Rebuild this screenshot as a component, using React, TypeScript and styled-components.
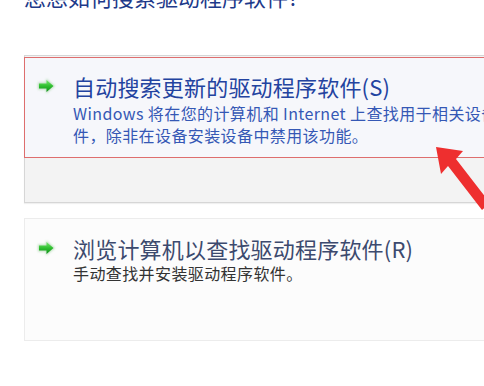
import React from 'react';
import styled, { createGlobalStyle } from 'styled-components';

const GlobalStyle = createGlobalStyle`
    html, body {
        margin: 0;
        padding: 0;
        background: #ffffff;
        overflow: hidden;
    }
    body {
        font-family: "Noto Sans CJK SC", "Noto Sans", sans-serif;
    }
`;

const Page = styled.div`
    position: relative;
    width: 484px;
    height: 386px;
    overflow: hidden;
    padding-left: 24px;
    box-sizing: border-box;
`;

const Heading = styled.h1`
    margin: -15px 0 0 0;
    font-size: 22px;
    line-height: 22px;
    font-weight: normal;
    color: #1e3a8a;
    white-space: nowrap;
`;

const Card = styled.div<{ $height: number; $muted?: boolean }>`
    width: 500px;
    height: ${props => props.$height}px;
    box-sizing: border-box;
    border: 1px solid ${props => (props.$muted ? '#ececec' : '#d6d6d6')};
    background: ${props => (props.$muted ? '#fcfcfc' : '#f3f3f3')};
    box-shadow: ${props => (props.$muted ? 'none' : '0 1px 1px rgba(0,0,0,0.06)')};
`;

const FirstCard = styled(Card)`
    margin-top: 48px;
    padding-top: 1px;
`;

const SecondCard = styled(Card)`
    margin-top: 15px;
`;

const Highlight = styled.div`
    height: 101px;
    box-sizing: border-box;
    margin-left: -1px;
    border: 1px solid #de6e6e;
    background: #f6f7fb;
`;

const Option = styled.div<{ $top: number }>`
    display: flex;
    align-items: flex-start;
    padding: ${props => props.$top}px 0 0 11px;
`;

const IconBox = styled.div`
    width: 37px;
    height: 28px;
    display: flex;
    align-items: center;
    flex-shrink: 0;
`;

const TextCol = styled.div`
    display: flex;
    flex-direction: column;
    white-space: nowrap;
`;

const Title = styled.div<{ $color: string }>`
    font-size: 22px;
    line-height: 28px;
    color: ${props => props.$color};
    letter-spacing: 0.2px;
`;

const Desc = styled.div<{ $color: string; $gap?: number }>`
    font-size: 16px;
    line-height: 22px;
    letter-spacing: 0.4px;
    margin-top: ${props => props.$gap || 0}px;
    color: ${props => props.$color};
`;

const Pointer = styled.svg`
    position: absolute;
    left: 420px;
    top: 135px;
`;

const GreenArrow = () => (
    <svg width="22" height="18" viewBox="0 0 22 18">
        <defs>
            <linearGradient id="ga" x1="0" y1="0" x2="0" y2="1">
                <stop offset="0" stopColor="#7be873" />
                <stop offset="0.5" stopColor="#2fbf2f" />
                <stop offset="1" stopColor="#0f8f1a" />
            </linearGradient>
            <filter id="glow" x="-30%" y="-30%" width="160%" height="160%">
                <feGaussianBlur stdDeviation="1.2" />
            </filter>
        </defs>
        <path d="M2 5.5 H10 V1.5 L19 9 L10 16.5 V12.5 H2 Z" fill="#a9d6a9" filter="url(#glow)" opacity="0.8" />
        <path d="M3 6.5 H10.5 V3 L17.5 9 L10.5 15 V11.5 H3 Z" fill="url(#ga)" />
    </svg>
);

export default function App() {
    return (
        <>
            <GlobalStyle />
            <Page>
                <Heading>您想如何搜索驱动程序软件?</Heading>
                <FirstCard $height={148}>
                    <Highlight>
                        <Option $top={14}>
                            <IconBox>
                                <GreenArrow />
                            </IconBox>
                            <TextCol>
                                <Title $color="#2343a0">自动搜索更新的驱动程序软件(S)</Title>
                                <Desc $color="#3558b5" $gap={2}>
                                    Windows 将在您的计算机和 Internet 上查找用于相关设备的最新驱动程序软
                                </Desc>
                                <Desc $color="#3558b5">件，除非在设备安装设备中禁用该功能。</Desc>
                            </TextCol>
                        </Option>
                    </Highlight>
                </FirstCard>
                <SecondCard $height={123} $muted>
                    <Option $top={15}>
                        <IconBox>
                            <GreenArrow />
                        </IconBox>
                        <TextCol>
                            <Title $color="#3c4a6e">浏览计算机以查找驱动程序软件(R)</Title>
                            <Desc $color="#333333">手动查找并安装驱动程序软件。</Desc>
                        </TextCol>
                    </Option>
                </SecondCard>
                <Pointer width="64" height="80" viewBox="0 0 64 80">
                    <path
                        d="M16 12 L43 16 L36 24 L70 68 L62 75 L28 31 L21 39 Z"
                        fill="#ee2f2f"
                    />
                </Pointer>
            </Page>
        </>
    );
}
